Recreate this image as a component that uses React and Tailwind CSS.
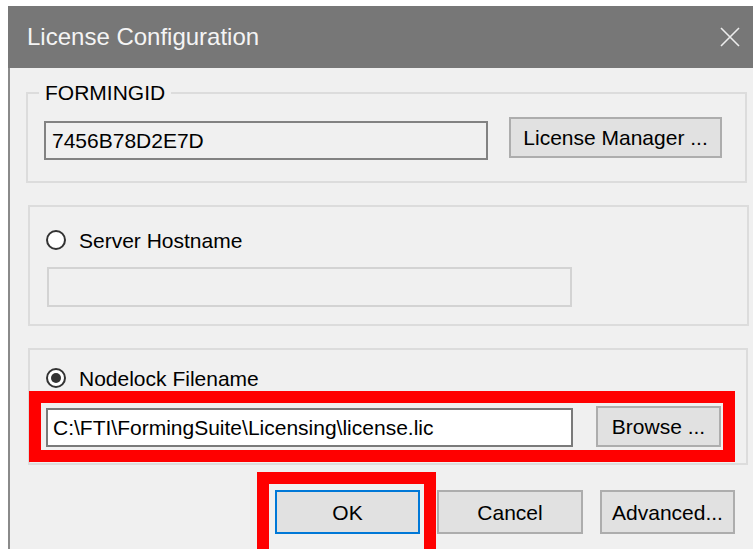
import React from "react";

const font = { fontFamily: '"Liberation Sans", Arial, sans-serif' };

// classic win32 push button
function PushButton({ children, className = "", primary = false }) {
  return (
    <button
      type="button"
      className={`flex items-center justify-center bg-[#e1e1e1] text-[21px] leading-none text-black ${
        primary ? "border-2 border-[#0078d7]" : "border-2 border-[#adadad]"
      } ${className}`}
    >
      {children}
    </button>
  );
}

function Radio({ checked, label }) {
  return (
    <label className="flex h-[24px] items-center">
      <span className="flex h-[20px] w-[20px] items-center justify-center rounded-full border-2 border-[#333333] bg-white">
        {checked && <span className="h-[10px] w-[10px] rounded-full bg-[#333333]" />}
      </span>
      <span className="ml-[13px] text-[21px] leading-none text-black">{label}</span>
    </label>
  );
}

// red annotation frame drawn around a control
function Highlight({ className }) {
  return <span className={`pointer-events-none absolute border-[12px] border-[#ff0000] ${className}`} />;
}

export default function App() {
  return (
    <div className="h-[549px] w-[753px] overflow-hidden bg-white pl-[8px] pt-[6px]" style={font}>
      <div className="flex h-[543px] flex-col">
        {/* title bar */}
        <div className="flex h-[62px] shrink-0 items-center justify-between bg-[#777777] pl-[19px] pr-[11px]">
          <span className="text-[24px] leading-none text-[#f4f4f4]">License Configuration</span>
          <svg width="22" height="22" viewBox="0 0 22 22" className="mr-[1px]">
            <path d="M2 2 L20 20 M20 2 L2 20" stroke="#ececec" strokeWidth="1.6" fill="none" />
          </svg>
        </div>

        {/* dialog body */}
        <div className="flex flex-1 flex-col border-l-2 border-[#8a8a8a] bg-[#f0f0f0] pl-[16px] pr-[6px] pt-[13px]">
          {/* FORMINGID group */}
          <fieldset className="border-2 border-[#dcdcdc] pb-[21px] pl-[16px] pr-[23px] pt-[12px]">
            <legend className="ml-[-5px] px-[6px] text-[21px] leading-[24px] text-black">FORMINGID</legend>
            <div className="flex items-start justify-between">
              <div className="mt-[4px] flex h-[39px] w-[444px] items-center border-2 border-[#828282] bg-[#f0f0f0] pl-[6px] text-[21px] leading-none text-black">
                7456B78D2E7D
              </div>
              <PushButton className="h-[41px] w-[213px]">License Manager ...</PushButton>
            </div>
          </fieldset>

          {/* server licence */}
          <div className="ml-[2px] mr-[-2px] mt-[22px] border-2 border-[#dcdcdc] pb-[17px] pl-[16px] pt-[21px]">
            <Radio checked={false} label="Server Hostname" />
            <div className="ml-[1px] mt-[15px] h-[40px] w-[525px] border-2 border-[#d3d3d3] bg-[#f0f0f0]" />
          </div>

          {/* nodelock licence */}
          <div className="ml-[2px] mr-[-1px] mt-[22px] border-2 border-[#dcdcdc] pb-[16px] pl-[16px] pt-[16px]">
            <Radio checked label="Nodelock Filename" />
            <div className="relative mt-[16px] flex w-[675px] items-start justify-between">
              <div className="mt-[2px] flex h-[39px] w-[527px] items-center border-2 border-[#7a7a7a] bg-white pl-[5px] text-[21px] leading-none text-black">
                C:\FTI\FormingSuite\Licensing\license.lic
              </div>
              <PushButton className="h-[41px] w-[125px]">Browse ...</PushButton>
              <Highlight className="-bottom-[15px] -left-[17px] -right-[14px] -top-[15px]" />
            </div>
          </div>

          {/* dialog buttons */}
          <div className="mt-[25px] flex justify-end gap-[17px] pr-[12px]">
            <div className="relative">
              <PushButton primary className="h-[44px] w-[145px]">OK</PushButton>
              <Highlight className="-bottom-[30px] -left-[18px] -right-[16px] -top-[18px]" />
            </div>
            <PushButton className="h-[44px] w-[146px]">Cancel</PushButton>
            <PushButton className="h-[44px] w-[135px]">Advanced...</PushButton>
          </div>
        </div>
      </div>
    </div>
  );
}
